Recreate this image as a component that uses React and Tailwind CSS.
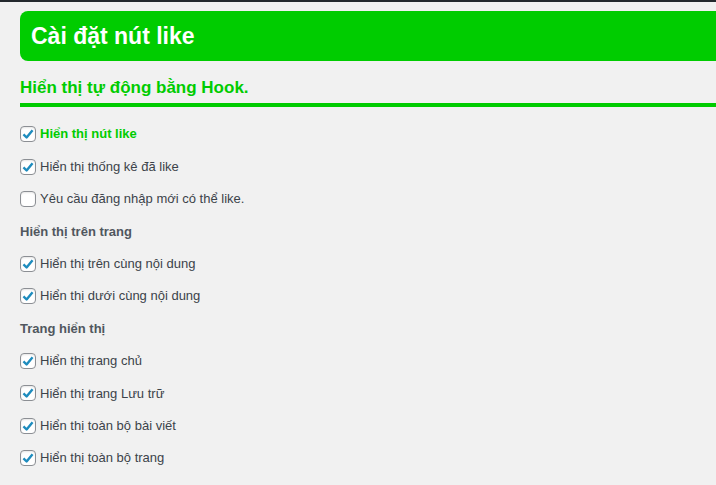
import { useState } from 'react'

const font = { fontFamily: '"Liberation Sans", Arial, sans-serif' }

const rows = [
  { type: 'check', id: 'show_button', label: 'Hiển thị nút like', checked: true, strong: true },
  { type: 'check', id: 'show_count', label: 'Hiển thị thống kê đã like', checked: true },
  { type: 'check', id: 'require_login', label: 'Yêu cầu đăng nhập mới có thể like.', checked: false },
  { type: 'heading', label: 'Hiển thị trên trang' },
  { type: 'check', id: 'pos_top', label: 'Hiển thị trên cùng nội dung', checked: true },
  { type: 'check', id: 'pos_bottom', label: 'Hiển thị dưới cùng nội dung', checked: true },
  { type: 'heading', label: 'Trang hiển thị' },
  { type: 'check', id: 'page_home', label: 'Hiển thị trang chủ', checked: true },
  { type: 'check', id: 'page_archive', label: 'Hiển thị trang Lưu trữ', checked: true },
  { type: 'check', id: 'page_single', label: 'Hiển thị toàn bộ bài viết', checked: true },
  { type: 'check', id: 'page_page', label: 'Hiển thị toàn bộ trang', checked: true },
]

const Checkbox = ({ checked, onChange }) => (
  <button
    type="button"
    onClick={onChange}
    className="w-4 h-4 shrink-0 rounded-[4px] border border-[#8c8f94] bg-white flex items-center justify-center shadow-[inset_0_1px_2px_rgba(0,0,0,0.1)]"
  >
    {checked && (
      <svg width="14" height="14" viewBox="0 0 20 20">
        <polyline points="3.5,10.5 8,15 16.5,4.5" fill="none" stroke="#1e8cbe" strokeWidth="3.4" strokeLinejoin="round" />
      </svg>
    )}
  </button>
)

const App = () => {
  const [values, setValues] = useState(() =>
    Object.fromEntries(rows.filter(r => r.type === 'check').map(r => [r.id, r.checked]))
  )

  const toggle = (id) => setValues(v => ({ ...v, [id]: !v[id] }))

  return (
    <div className="min-h-screen w-[716px] h-[485px] overflow-hidden bg-[#f1f1f1]" style={font}>
      {/* admin bar edge */}
      <div className="h-[2px] bg-[#23282d]" />

      <div className="pl-5">
        {/* Title */}
        <div className="mt-[9px] h-[50px] mr-[-10px] rounded-l-[8px] bg-[#00cc00] flex items-center pl-[11px]">
          <h1 className="text-[23px] font-bold text-white leading-none">Cài đặt nút like</h1>
        </div>

        {/* Section */}
        <h2 className="mt-[15px] pb-[3px] leading-[24px] text-[17px] font-bold text-[#00cc00] border-b-4 border-[#00cc00]">
          Hiển thị tự động bằng Hook.
        </h2>

        <div className="mt-[11px]">
          {rows.map((row, i) => {
            if (row.type === 'heading') {
              return (
                <div key={i} className="h-[32.4px] flex items-center text-[13px] font-bold text-[#50575e]">
                  {row.label}
                </div>
              )
            }
            return (
              <label key={row.id} className="h-[32.4px] flex items-center gap-1 cursor-pointer">
                <Checkbox checked={values[row.id]} onChange={() => toggle(row.id)} />
                <span className={`text-[13px] ${row.strong ? 'font-bold text-[#00cc00]' : 'text-[#3c434a]'}`}>
                  {row.label}
                </span>
              </label>
            )
          })}
        </div>
      </div>
    </div>
  )
}

export default App
